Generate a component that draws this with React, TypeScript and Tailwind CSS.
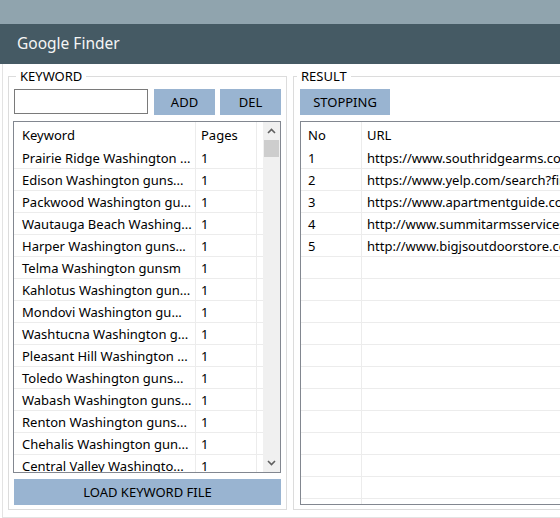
import React from "react";

const keywords = [
  "Prairie Ridge Washington ...",
  "Edison Washington guns...",
  "Packwood Washington gu...",
  "Wautauga Beach Washing...",
  "Harper Washington guns...",
  "Telma Washington gunsm",
  "Kahlotus Washington gun...",
  "Mondovi Washington gu...",
  "Washtucna Washington g...",
  "Pleasant Hill Washington ...",
  "Toledo Washington guns...",
  "Wabash Washington guns...",
  "Renton Washington guns...",
  "Chehalis Washington gun...",
  "Central Valley Washingto...",
];

const urls = [
  "https://www.southridgearms.com/",
  "https://www.yelp.com/search?find_desc=gunsmith",
  "https://www.apartmentguide.com/apartments/",
  "http://www.summitarmsservices.com/",
  "http://www.bigjsoutdoorstore.com/",
];

function Chevron({ up }: { up: boolean }) {
  return (
    <svg width="9" height="6" viewBox="0 0 9 6">
      <path
        d={up ? "M1 5 L4.5 1.5 L8 5" : "M1 1 L4.5 4.5 L8 1"}
        fill="none"
        stroke="#606060"
        strokeWidth="1.6"
      />
    </svg>
  );
}

export default function App() {
  return (
    <div
      className="w-[560px] h-[518px] bg-white overflow-hidden text-black"
      style={{ fontFamily: '"Noto Sans", "Open Sans", sans-serif' }}
    >
      <div className="h-[24px] bg-[#90a4ae]" />
      <div className="h-[40px] bg-[#455a64] flex items-center pl-[17px] pb-[1px] text-[15.5px] text-[#f5f5f5]">
        Google Finder
      </div>
      <div className="ml-[2px] h-[454px] border-l border-b border-[#e3e3e3] flex items-start pl-[5px] pt-[12px] overflow-hidden">
        {/* KEYWORD group */}
        <div className="relative w-[279px] h-[434px] shrink-0 border border-[#dcdcdc] pt-[12px]">
          <div className="absolute left-[7px] -top-[10px] px-[4px] bg-white text-[13px] leading-[18px]">
            KEYWORD
          </div>
          <div className="flex items-start h-[26px]">
            <div className="ml-[5px] w-[134px] h-[25px] border border-[#7a7a7a] bg-white" />
            <div className="ml-[6px] w-[61px] h-[26px] pt-[2px] bg-[#99b4d1] flex items-center justify-center text-[13px]">
              ADD
            </div>
            <div className="ml-[5px] w-[61px] h-[26px] pt-[2px] bg-[#99b4d1] flex items-center justify-center text-[13px]">
              DEL
            </div>
          </div>
          <div className="ml-[4px] mt-[6px] w-[268px] h-[352px] border border-[#828790] flex overflow-hidden">
            <div className="w-[249px] text-[13px] overflow-hidden">
              <div className="flex h-[25px]">
                <div className="w-[182px] border-r border-[#ececec] flex items-center pl-[8px] pt-[2px]">Keyword</div>
                <div className="w-[61px] border-r border-[#ececec] flex items-center pl-[5px] pt-[2px]">Pages</div>
              </div>
              {keywords.map((k) => (
                <div key={k} className="flex h-[22px] border-b border-[#ececec]">
                  <div className="w-[182px] border-r border-[#ececec] flex items-center pl-[8px] pt-[2px] whitespace-nowrap overflow-hidden">
                    {k}
                  </div>
                  <div className="w-[61px] border-r border-[#ececec] flex items-center pl-[5px] pt-[2px]">1</div>
                </div>
              ))}
            </div>
            <div className="w-[17px] bg-[#f0f0f0] flex flex-col items-center">
              <div className="h-[18px] w-full flex items-center justify-center">
                <Chevron up />
              </div>
              <div className="w-[15px] h-[17px] bg-[#cdcdcd]" />
              <div className="flex-1" />
              <div className="h-[18px] w-full flex items-center justify-center">
                <Chevron up={false} />
              </div>
            </div>
          </div>
          <div className="ml-[5px] mt-[6px] w-[267px] h-[26px] pt-[2px] bg-[#99b4d1] flex items-center justify-center text-[13px]">
            LOAD KEYWORD FILE
          </div>
        </div>

        {/* RESULT group */}
        <div className="relative ml-[6px] w-[300px] h-[434px] shrink-0 border border-[#dcdcdc] pt-[12px]">
          <div className="absolute left-[3px] -top-[10px] px-[4px] bg-white text-[13px] leading-[18px]">
            RESULT
          </div>
          <div className="ml-[6px] w-[90px] h-[26px] pt-[2px] bg-[#99b4d1] flex items-center justify-center text-[13px]">
            STOPPING
          </div>
          <div className="ml-[6px] mt-[6px] w-[300px] h-[384px] border border-[#828790] overflow-hidden text-[13px]">
            <div className="flex h-[25px]">
              <div className="w-[61px] border-r border-[#ececec] flex items-center pl-[7px] pt-[2px]">No</div>
              <div className="flex-1 flex items-center pl-[5px] pt-[2px]">URL</div>
            </div>
            {Array.from({ length: 17 }).map((_, i) => (
              <div key={i} className="flex h-[22px] border-b border-[#ececec]">
                <div className="w-[61px] shrink-0 border-r border-[#ececec] flex items-center pl-[7px] pt-[2px]">
                  {i < urls.length ? String(i + 1) : ""}
                </div>
                <div className="flex-1 flex items-center pl-[5px] pt-[2px] whitespace-nowrap overflow-hidden">
                  {i < urls.length ? urls[i] : ""}
                </div>
              </div>
            ))}
          </div>
        </div>
      </div>
    </div>
  );
}
